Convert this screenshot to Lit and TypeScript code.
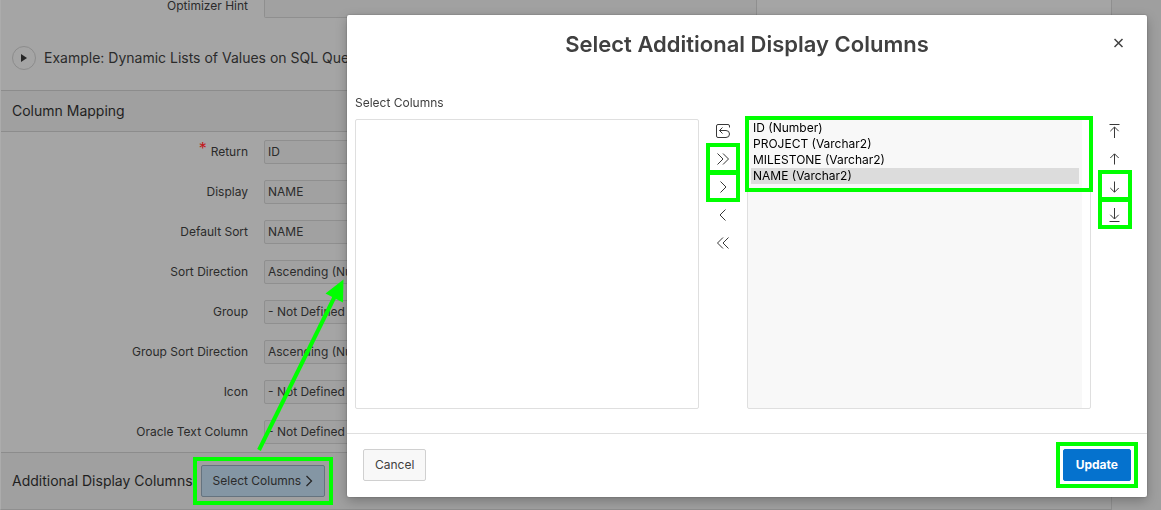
import { LitElement, html, css, svg } from "lit";
import { customElement } from "lit/decorators.js";

const field = (id: string, label: string, value: string, required = false) => html`
  <div class="row">
    <label for=${id}>${required ? html`<span class="req">*</span>` : ""}${label}</label>
    <select id=${id}><option>${value}</option></select>
  </div>`;

const icon = (body: unknown) => html`
  <svg class="icon" viewBox="0 0 16 16" width="16" height="16" aria-hidden="true">${body}</svg>`;

const icons = {
  reset: svg`<path d="M14.500 4.500V3a1.500 1.500 0 0 0-1.500-1.500H3A1.500 1.500 0 0 0 1.500 3v10A1.500 1.500 0 0 0 3 14.500h8a3.500 3.500 0 0 0 0-7H4.500M7.500 4.500l-3 3 3 3"/>`,
  allRight: svg`<path d="M2.500 2.500L8 8l-5.500 5.500M8 2.500L13.500 8 8 13.500"/>`,
  right: svg`<path d="M5.500 2.500L11 8l-5.500 5.500"/>`,
  left: svg`<path d="M10.500 2.500L5 8l5.500 5.500"/>`,
  allLeft: svg`<path d="M8 2.500L2.500 8 8 13.500M13.500 2.500L8 8l5.500 5.500"/>`,
  top: svg`<path d="M2.500 1.500h10M7.500 15V4.200M3.300 8.200L7.500 4l4.200 4.200"/>`,
  up: svg`<path d="M7.500 13.500V3M3.300 7L7.500 2.800 11.700 7"/>`,
  down: svg`<path d="M7.500 2.500V13M3.300 9L7.500 13.200 11.700 9"/>`,
  bottom: svg`<path d="M2.500 14.500h10M7.500 1v10.800M3.300 7.800L7.500 12l4.200-4.200"/>`,
};

@customElement("app-root")
export class AppRoot extends LitElement {
  static styles = css`
    :host {
      display: block;
      position: relative;
      height: 100vh;
      overflow: hidden;
      background: #9f9f9f;
      font-family: Inter, "Liberation Sans", sans-serif;
      font-size: 12px;
      line-height: 16px;
      color: #2b2b2b;
    }
    *, *::after { box-sizing: border-box; }
    button, select, textarea { font: inherit; color: inherit; margin: 0; }
    button { cursor: pointer; }
    h1, h2 { margin: 0; font-weight: 400; }
    .page {
      margin-right: 49px;
      background: #a5a5a5;
      border-left: 1px solid #acacac;
      border-right: 1px solid #8f8f8f;
      border-bottom: 1px solid #8f8f8f;
    }
    .row {
      display: grid;
      grid-template-columns: 247px 493px;
      column-gap: 16px;
      align-items: center;
      height: 40px;
    }
    .row label { text-align: right; }
    .row select, .row textarea {
      appearance: none;
      width: 100%;
      border: 1px solid #8f8f8f;
      border-radius: 2px;
      background: #a1a1a1;
      resize: none;
    }
    .row select { height: 24px; padding: 0 3px; }
    .hint { height: 18px; align-items: start; }
    .hint label { line-height: 12px; }
    .row.hint textarea { height: 18px; border-top: 0; border-radius: 0 0 2px 2px; }
    .req { color: #c2181c; font-size: 16px; line-height: 0; vertical-align: 2px; margin-right: 4px; }
    .example { display: flex; align-items: center; gap: 8px; height: 72px; padding: 8px 11px 0; font-size: 14px; }
    .example button {
      display: grid;
      place-items: center;
      width: 24px;
      height: 24px;
      padding: 0;
      border: 1px solid #8c8c8c;
      border-radius: 50%;
      background: none;
    }
    .band {
      display: flex;
      align-items: center;
      gap: 8px;
      height: 42px;
      padding: 0 11px;
      border-top: 1px solid #8c8c8c;
      background: #a0a0a0;
    }
    .band h2 { font-size: 14px; color: #1f1f1f; }
    .mapping { border-bottom: 1px solid #8c8c8c; }
    .extra { height: 57px; }
    .open {
      display: flex;
      align-items: center;
      justify-content: space-between;
      width: 124px;
      height: 32px;
      padding: 0 11px;
      border: 1px solid #65737f;
      border-radius: 2px;
      background: #8496a4;
    }
    .mark { position: relative; }
    .mark::after {
      content: "";
      position: absolute;
      inset: -9px;
      border: 4px solid #00ff00;
      pointer-events: none;
    }
    .icon { display: block; fill: none; stroke: #383838; stroke-width: 1; }
    .arrow { position: absolute; left: 250px; top: 270px; pointer-events: none; }
    .modal {
      position: absolute;
      top: 15px;
      right: 14px;
      width: 800px;
      max-width: calc(100% - 28px);
      border-radius: 2px;
      background: #fff;
      color: #404040;
      box-shadow: 0 0 2px rgba(0, 0, 0, 0.3), 0 4px 12px rgba(0, 0, 0, 0.25);
    }
    .head { position: relative; padding: 13px 48px; text-align: center; }
    .head h1 { font-size: 22px; line-height: 32px; font-weight: 600; }
    .close {
      position: absolute;
      top: 16px;
      right: 16px;
      display: grid;
      place-items: center;
      width: 24px;
      height: 24px;
      padding: 0;
      border: 0;
      background: none;
    }
    .body { padding: 22px 8px 24px; }
    .caption { display: block; margin-bottom: 8px; }
    .shuttle { display: grid; grid-template-columns: 1fr 48px 1fr 48px; }
    .list { display: grid; }
    .list select {
      width: 100%;
      height: 290px;
      border: 1px solid #dfdfdf;
      border-radius: 2px;
      padding: 0 11px 0 3px;
      background: #fff;
      color: #000;
      overflow: hidden;
      outline: 0;
    }
    .list .chosen { background: linear-gradient(to left, #fff 8px, #f8f8f8 8px); }
    .list option { height: 16px; min-height: 16px; padding: 0 2px; line-height: 16px; color: #000; }
    .list option:checked { background: #dcdcdc linear-gradient(#dcdcdc, #dcdcdc); color: #000; }
    .list.mark::after { inset: -3px -2px auto; height: 76px; }
    .tools { display: flex; flex-direction: column; align-items: center; margin-top: -2px; }
    .tools button {
      display: grid;
      place-items: center;
      width: 28px;
      height: 28px;
      padding: 0;
      border: 0;
      background: none;
    }
    .tools .mark::after { inset: -2px -3px -1px; }
    .order .mark::after { inset: -3px -3px 0; }
    .foot {
      display: flex;
      justify-content: space-between;
      padding: 15px 16px 16px;
      border-top: 1px solid #dfdfdf;
    }
    .foot button {
      height: 32px;
      padding: 0 11px;
      border: 1px solid #d0d0d0;
      border-radius: 2px;
      background: #f8f8f8;
    }
    .foot .update { padding: 0 12px; border-color: #0572ce; background: #0572ce; color: #fff; font-weight: 700; }
    .foot .mark::after { inset: -8px; }
  `;

  render() {
    return html`
      <main class="page">
        <div class="row hint">
          <label for="hint">Optimizer Hint</label>
          <textarea id="hint"></textarea>
        </div>
        <div class="example">
          <button aria-label="Expand example">
            <svg width="6" height="8" viewBox="0 0 6 8"><path d="M0 0l6 4-6 4z" fill="#262626" /></svg>
          </button>
          <span>Example: Dynamic Lists of Values on SQL Query</span>
        </div>
        <div class="band mapping"><h2>Column Mapping</h2></div>
        ${field("return", "Return", "ID", true)}
        ${field("display", "Display", "NAME")}
        ${field("sort", "Default Sort", "NAME")}
        ${field("direction", "Sort Direction", "Ascending (Nulls Last)")}
        ${field("group", "Group", "- Not Defined -")}
        ${field("group-direction", "Group Sort Direction", "Ascending (Nulls Last)")}
        ${field("icon", "Icon", "- Not Defined -")}
        ${field("text-column", "Oracle Text Column", "- Not Defined -")}
        <div class="band extra">
          <h2>Additional Display Columns</h2>
          <button class="open mark">
            Select Columns
            <svg width="8" height="12" viewBox="0 0 8 12" aria-hidden="true">
              <path d="M1.500 1L6.500 6l-5 5" fill="none" stroke="#262626" stroke-width="1.300" />
            </svg>
          </button>
        </div>
      </main>

      <section class="modal" role="dialog" aria-labelledby="title">
        <header class="head">
          <h1 id="title">Select Additional Display Columns</h1>
          <button class="close" aria-label="Close">
            <svg width="10" height="10" viewBox="0 0 10 10">
              <path d="M0.500 1l8 8M8.500 1l-8 8" stroke="#404040" stroke-width="1.500" />
            </svg>
          </button>
        </header>
        <div class="body">
          <label class="caption" for="available">Select Columns</label>
          <div class="shuttle">
            <div class="list"><select id="available" multiple></select></div>
            <div class="tools">
              <button aria-label="Reset">${icon(icons.reset)}</button>
              <button class="mark" aria-label="Move All">${icon(icons.allRight)}</button>
              <button class="mark" aria-label="Move">${icon(icons.right)}</button>
              <button aria-label="Remove">${icon(icons.left)}</button>
              <button aria-label="Remove All">${icon(icons.allLeft)}</button>
            </div>
            <div class="list mark">
              <select class="chosen" multiple aria-label="Selected columns">
                <option>ID (Number)</option>
                <option>PROJECT (Varchar2)</option>
                <option>MILESTONE (Varchar2)</option>
                <option selected>NAME (Varchar2)</option>
              </select>
            </div>
            <div class="tools order">
              <button aria-label="Top">${icon(icons.top)}</button>
              <button aria-label="Up">${icon(icons.up)}</button>
              <button class="mark" aria-label="Down">${icon(icons.down)}</button>
              <button class="mark" aria-label="Bottom">${icon(icons.bottom)}</button>
            </div>
          </div>
        </div>
        <footer class="foot">
          <button>Cancel</button>
          <button class="update mark">Update</button>
        </footer>
      </section>

      <svg class="arrow" width="100" height="184" viewBox="250 270 100 184" aria-hidden="true">
        <path d="M259 450L335 296" stroke="#00ff00" stroke-width="4" />
        <path d="M343.500 279.500L343 302.500L325.500 293.500z" fill="#00ff00" />
      </svg>
    `;
  }
}
